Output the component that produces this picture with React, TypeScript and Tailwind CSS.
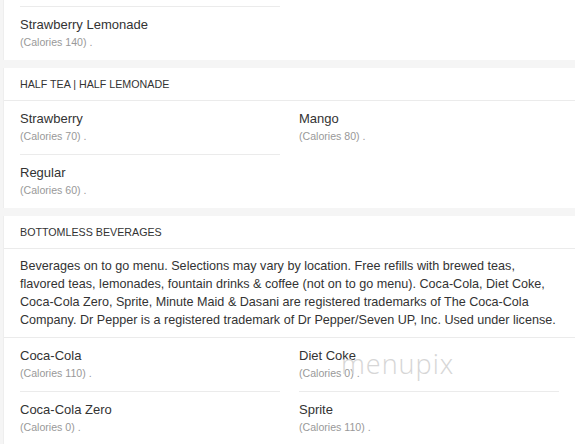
const font = { fontFamily: '"Liberation Sans", Arial, sans-serif' };

type Item = { name: string; cal: string };

const MenuItem = ({ item, last }: { item: Item; last?: boolean }) => (
  <div className="pr-[19px]">
    <div
      className={`pt-[9px] pb-[10px] ${last ? "" : "border-b border-[#ebebeb]"}`}
    >
      <div className="text-[13px] leading-[18px] text-[#333]">{item.name}</div>
      <div className="text-[10.6px] leading-[16px] text-[#999]">{item.cal} .</div>
    </div>
  </div>
);

const Header = ({ title }: { title: string }) => (
  <div className="h-[33px] flex items-center px-4 border-b border-[#ebebeb] text-[10.7px] text-[#333] uppercase">
    {title}
  </div>
);

const App = () => {
  return (
    <div className="w-[575px] h-[444px] overflow-hidden bg-[#f5f5f5]" style={font}>
      <div className="ml-[3px] bg-white border-l border-[#eee]">
        <div className="pl-4">
          <div className="w-[260px] h-[7px] border-b border-[#ebebeb]" />
          <div className="w-[279px]">
            <MenuItem item={{ name: "Strawberry Lemonade", cal: "(Calories 140)" }} last />
          </div>
        </div>
      </div>

      <div className="h-2" />

      <div className="ml-[3px] bg-white border-l border-[#eee]">
        <Header title="Half Tea | Half Lemonade" />
        <div className="pl-4 grid grid-cols-[279px_279px]">
          <MenuItem item={{ name: "Strawberry", cal: "(Calories 70)" }} />
          <MenuItem item={{ name: "Mango", cal: "(Calories 80)" }} last />
          <MenuItem item={{ name: "Regular", cal: "(Calories 60)" }} last />
        </div>
      </div>

      <div className="h-2" />

      <div className="relative ml-[3px] bg-white border-l border-[#eee]">
        <Header title="Bottomless Beverages" />
        <div className="pl-4 pt-2 pb-2 border-b border-[#ebebeb] text-[12.6px] leading-[18px] text-[#333] whitespace-nowrap">
          Beverages on to go menu. Selections may vary by location. Free refills with brewed teas,
          <br />
          flavored teas, lemonades, fountain drinks &amp; coffee (not on to go menu). Coca-Cola, Diet Coke,
          <br />
          Coca-Cola Zero, Sprite, Minute Maid &amp; Dasani are registered trademarks of The Coca-Cola
          <br />
          Company. Dr Pepper is a registered trademark of Dr Pepper/Seven UP, Inc. Used under license.
        </div>
        <div className="pl-4 grid grid-cols-[279px_279px]">
          <MenuItem item={{ name: "Coca-Cola", cal: "(Calories 110)" }} />
          <MenuItem item={{ name: "Diet Coke", cal: "(Calories 0)" }} />
          <MenuItem item={{ name: "Coca-Cola Zero", cal: "(Calories 0)" }} last />
          <MenuItem item={{ name: "Sprite", cal: "(Calories 110)" }} last />
        </div>
        <div
          className="absolute left-[337px] top-[128px] text-[27px] tracking-[1px] text-[#d6d6d6] font-light pointer-events-none"
          style={{ fontFamily: '"Open Sans", "Liberation Sans", sans-serif' }}
        >
          menupix
        </div>
      </div>
    </div>
  );
};

export default App;
